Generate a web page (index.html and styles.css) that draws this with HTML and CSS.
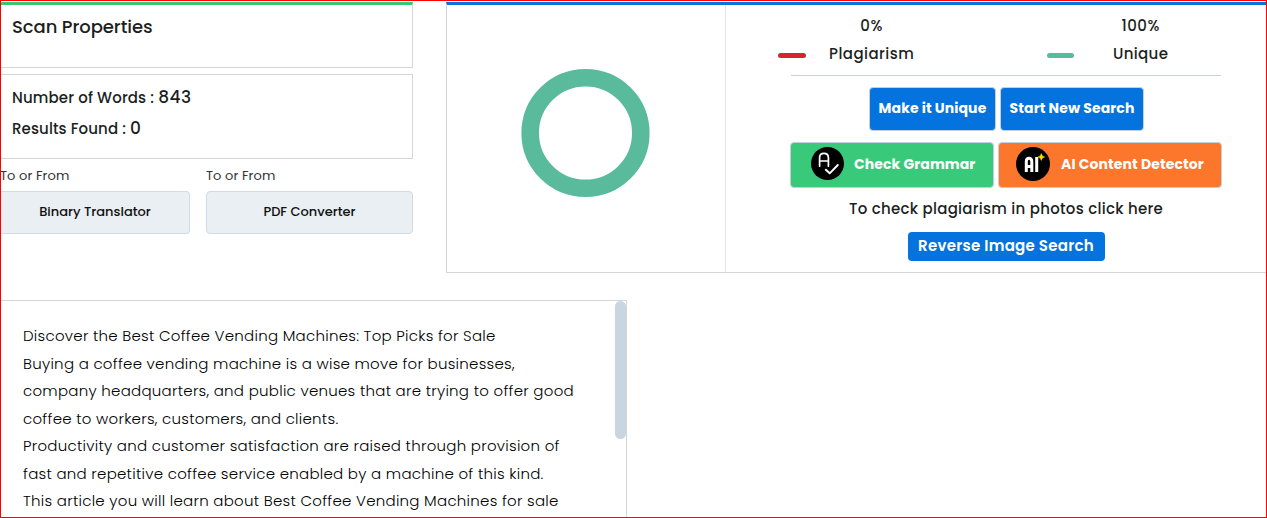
FILE: index.html
```
<!DOCTYPE html>
<html lang="en">
<head>
<meta charset="utf-8">
<title>Scan results</title>
<link rel="stylesheet" href="styles.css">
</head>
<body>
<div class="page">
  <div class="top">
    <section class="left">
      <div class="card head"><span class="t title">Scan Properties</span></div>
      <div class="card stats">
        <div class="stat"><span class="t s1">Number of Words :</span><span class="t num">843</span></div>
        <div class="stat"><span class="t s2">Results Found :</span><span class="t num">0</span></div>
      </div>
      <div class="tools">
        <div class="tool first"><span class="t label">To or From</span><a class="soft"><span class="t">Binary Translator</span></a></div>
        <div class="tool"><span class="t label">To or From</span><a class="soft"><span class="t">PDF Converter</span></a></div>
      </div>
    </section>
    <section class="result">
      <div class="chart"><svg width="130" height="130" viewBox="0 0 130 130"><circle cx="64.5" cy="65" r="55.3" fill="none" stroke="#5aba9c" stroke-width="17.6"/></svg></div>
      <div class="panel">
        <div class="legend">
          <div class="item plag"><i class="dash red"></i><div class="pair"><span class="t">0%</span><span class="t">Plagiarism</span></div></div>
          <div class="item uniq"><i class="dash green"></i><div class="pair"><span class="t">100%</span><span class="t unq">Unique</span></div></div>
        </div>
        <div class="actions">
          <div class="rule"></div>
          <div class="row r1"><a class="btn blue b1"><span class="t">Make it Unique</span></a><a class="btn blue b2"><span class="t">Start New Search</span></a></div>
          <div class="row r2">
            <a class="btn grn b3">
              <svg width="33" height="33" viewBox="0 0 33 33"><circle cx="16.5" cy="16.5" r="16.5"/><g fill="none" stroke="#fff" stroke-width="1.7" stroke-linecap="round" stroke-linejoin="round"><path d="M8.6 19.2V10.7Q8.6 6.3 13 6.3T17.4 10.7V19.2M8.6 14H17.4"/><path d="M14.8 22.7L18.7 26.3L26.8 18" stroke-width="1.9"/></g></svg>
              <span class="t">Check Grammar</span></a>
            <a class="btn org b4">
              <svg width="34" height="34" viewBox="0 0 34 34"><circle cx="17" cy="17" r="17"/><g fill="none" stroke="#fff" stroke-width="3"><path d="M10.3 25V14.5Q10.3 11.2 13 11.2T15.8 14.5V25M10.3 19.5H15.8"/><path d="M20.7 10V25"/></g><path d="M25.3 6.6L26.4 8.9L28.7 10L26.4 11.1L25.3 13.4L24.2 11.1L21.9 10L24.2 8.9Z" fill="#fd0" stroke="#fd0" stroke-width=".5"/></svg>
              <span class="t">AI Content Detector</span></a>
          </div>
          <span class="t photos">To check plagiarism in photos click here</span>
          <a class="reverse"><span class="t">Reverse Image Search</span></a>
        </div>
      </div>
    </section>
  </div>
  <section class="article">
    <div class="copy">
      <span class="t">Discover the Best Coffee Vending Machines: Top Picks for Sale</span>
      <span class="t">Buying a coffee vending machine is a wise move for businesses,</span>
      <span class="t">company headquarters, and public venues that are trying to offer good</span>
      <span class="t">coffee to workers, customers, and clients.</span>
      <span class="t">Productivity and customer satisfaction are raised through provision of</span>
      <span class="t">fast and repetitive coffee service enabled by a machine of this kind.</span>
      <span class="t">This article you will learn about Best Coffee Vending Machines for sale</span>
    </div>
    <div class="thumb"></div>
  </section>
</div>
</body>
</html>
```
FILE: styles.css
```
* { box-sizing: border-box; }
body { margin: 0; font-family: Poppins, Inter, "Open Sans", sans-serif; color: #1c1f22; background: #fff; }
.page { width: 1267px; height: 518px; border: 1px solid #f00; overflow: hidden; padding-top: 1px; }
.t { white-space: nowrap; display: inline-block; }
.top { display: flex; gap: 33px; height: 271px; }
.left { width: 412px; }
.card { border: 1px solid #d5d5d5; border-left: 0; }
.head { height: 66px; border-top: 3px solid #36c778; padding: 9px 0 0 11px; }
.title { font-size: 18px; font-weight: 500; line-height: 26px; letter-spacing: -.08px; }
.stats { height: 85px; margin-top: 6px; padding: 7px 0 0 11px; }
.stat { height: 31px; display: flex; align-items: baseline; gap: 4px; line-height: 31px; font-size: 15px; font-weight: 500; }
.s1 { letter-spacing: .14px; }
.s2 { letter-spacing: .1px; }
.num { font-size: 17px; letter-spacing: .5px; }
.tools { display: grid; grid-template-columns: 189px 207px; gap: 16px; padding-top: 5px; }
.label { font-size: 13px; line-height: 24px; height: 24px; color: #333; display: block; letter-spacing: .08px; }
.first .label { margin-left: -1px; }
.soft { display: flex; justify-content: center; align-items: center; height: 43px; margin-top: 3px; padding-bottom: 1px; background: #e9eff3; border: 1px solid #cfdbe6; border-radius: 4px; font-size: 13px; font-weight: 500; color: #111; }
.first .soft { border-left: 0; border-radius: 0 4px 4px 0; }
.result { width: 820px; border: 1px solid #d5d5d5; border-right: 0; border-top: 3px solid #0b72e0; display: flex; }
.chart { width: 279px; border-right: 1px solid #e2e2ec; display: flex; align-items: center; justify-content: center; padding: 0 1px 12px 0; }
.panel { flex: 1; display: flex; flex-direction: column; }
.legend { display: flex; height: 70px; padding-top: 7px; }
.item { display: flex; }
.dash { width: 28px; height: 5px; border-radius: 3px; margin-top: 41px; }
.red { background: #d3262e; }
.green { background: #5aba9c; width: 27px; }
.plag { padding-left: 52px; width: 321px; gap: 23px; }
.pair { display: flex; flex-direction: column; align-items: center; line-height: 28px; font-size: 15px; font-weight: 500; letter-spacing: .45px; }
.unq { letter-spacing: .35px; }
.uniq { gap: 39px; }
.actions { margin-left: 20px; display: flex; flex-direction: column; align-items: center; }
.rule { width: 430px; height: 1px; background: #cdd3dc; }
.row { display: flex; gap: 4px; }
.btn { display: flex; align-items: center; justify-content: center; border: 1px solid #c3d0dc; border-radius: 4px; color: #fff; font-size: 14px; font-weight: 700; padding-bottom: 3px; letter-spacing: .1px; }
.btn .t { padding-top: 2px; }
.blue { background: #0473de; }
.grn { background: #39c97a; }
.org { background: #fc762b; }
.r1 { margin: 11px 0 0 1px; height: 44px; }
.b1 { width: 127px; }
.b2 { width: 144px; }
.r2 { margin-top: 11px; height: 46px; }
.b3 { width: 204px; gap: 10px; padding-left: 20px; justify-content: flex-start; }
.b4 { width: 224px; gap: 11px; padding-left: 17px; justify-content: flex-start; }
.photos { font-size: 15px; font-weight: 500; line-height: 28px; margin-top: 7px; letter-spacing: .27px; }
.reverse { width: 197px; height: 29px; padding-bottom: 2px; background: #0473de; color: #fff; border-radius: 4px; display: flex; align-items: center; justify-content: center; font-size: 15px; font-weight: 600; margin-top: 9px; letter-spacing: .25px; }
.article { width: 626px; height: 230px; margin-top: 27px; border: 1px solid #d5d5d5; border-left: 0; display: flex; justify-content: space-between; }
.copy { padding: 21px 0 0 22px; display: flex; flex-direction: column; align-items: flex-start; font-size: 15px; font-weight: 300; line-height: 27.5px; letter-spacing: .265px; color: #000; }
.thumb { width: 11px; height: 138px; border-radius: 6px; background: #c9d6df; }
```
